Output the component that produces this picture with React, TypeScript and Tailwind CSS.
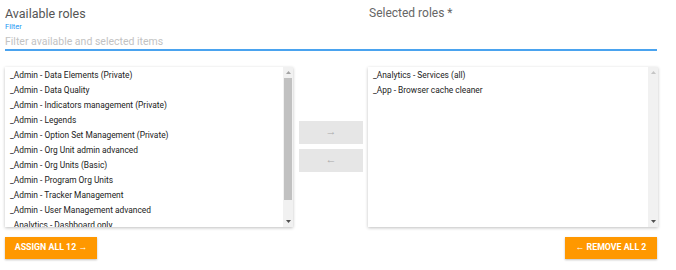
import React from "react";

const available = [
  "_Admin - Data Elements (Private)",
  "_Admin - Data Quality",
  "_Admin - Indicators management (Private)",
  "_Admin - Legends",
  "_Admin - Option Set Management (Private)",
  "_Admin - Org Unit admin advanced",
  "_Admin - Org Units (Basic)",
  "_Admin - Program Org Units",
  "_Admin - Tracker Management",
  "_Admin - User Management advanced",
  "_Analytics - Dashboard only",
];

const selected = ["_Analytics - Services (all)", "_App - Browser cache cleaner"];

function ListBox({ items, thumb }: { items: string[]; thumb: boolean }) {
  return (
    <div className="flex h-[160px] bg-white shadow-[0_1px_3px_rgba(0,0,0,0.25)]">
      <div className="flex-1 overflow-hidden pl-[5px] pt-[1px]">
        {items.map((item) => (
          <div key={item} className="h-[15px] whitespace-nowrap text-[8.4px] leading-[15px] text-[#222]">
            {item}
          </div>
        ))}
      </div>
      <div className="flex w-[10px] flex-col bg-[#f1f1f1]">
        <div className="flex h-[11px] items-center justify-center">
          <svg width="5" height="3" viewBox="0 0 5 3">
            <path d="M2.5 0 L5 3 L0 3 Z" fill={thumb ? "#a3a3a3" : "#c5c5c5"} />
          </svg>
        </div>
        <div className="flex-1 px-[1px]">
          {thumb && <div className="h-[122px] bg-[#c1c1c1]" />}
        </div>
        <div className="flex h-[11px] items-center justify-center">
          <svg width="5" height="3" viewBox="0 0 5 3">
            <path d="M0 0 L5 0 L2.5 3 Z" fill="#505050" />
          </svg>
        </div>
      </div>
    </div>
  );
}

export default function App() {
  return (
    <div className="h-[270px] w-[676px] bg-white pl-[5px] font-['Roboto',sans-serif]">
      <div className="flex w-[653px] pt-[5px]">
        <div className="w-[364px] text-[12.5px] leading-[17px] text-[#555]">Available roles</div>
        <div className="text-[12px] leading-[17px] text-[#666]">Selected roles *</div>
      </div>
      <div className="w-[652px] border-b-2 border-[#4aa3ef]">
        <div className="text-[7.5px] leading-[9px] text-[#2196f3]">Filter</div>
        <div className="pb-[1px] pt-[4px] text-[10.5px] leading-[13px] text-[#c2c2c2]">
          Filter available and selected items
        </div>
      </div>
      <div className="mt-[16px] flex w-[653px]">
        <div className="w-[288px]">
          <ListBox items={available} thumb />
        </div>
        <div className="ml-[6px] flex w-[64px] flex-col gap-[5px] pt-[54px]">
          <button className="flex h-[23px] items-center justify-center bg-[#e6e6e6] text-[11px] text-[#aaa]">→</button>
          <button className="flex h-[23px] items-center justify-center bg-[#e6e6e6] text-[11px] text-[#aaa]">←</button>
        </div>
        <div className="ml-[5px] w-[290px]">
          <ListBox items={selected} thumb={false} />
        </div>
      </div>
      <div className="mt-[10px] flex w-[652px] justify-between">
        <button className="h-[22px] w-[92px] bg-[#ff9800] text-[8.8px] font-bold text-white shadow-[0_1px_2px_rgba(0,0,0,0.25)]">
          ASSIGN ALL 12 →
        </button>
        <button className="h-[22px] w-[92px] bg-[#ff9800] text-[8.8px] font-bold text-white shadow-[0_1px_2px_rgba(0,0,0,0.25)]">
          ← REMOVE ALL 2
        </button>
      </div>
    </div>
  );
}
